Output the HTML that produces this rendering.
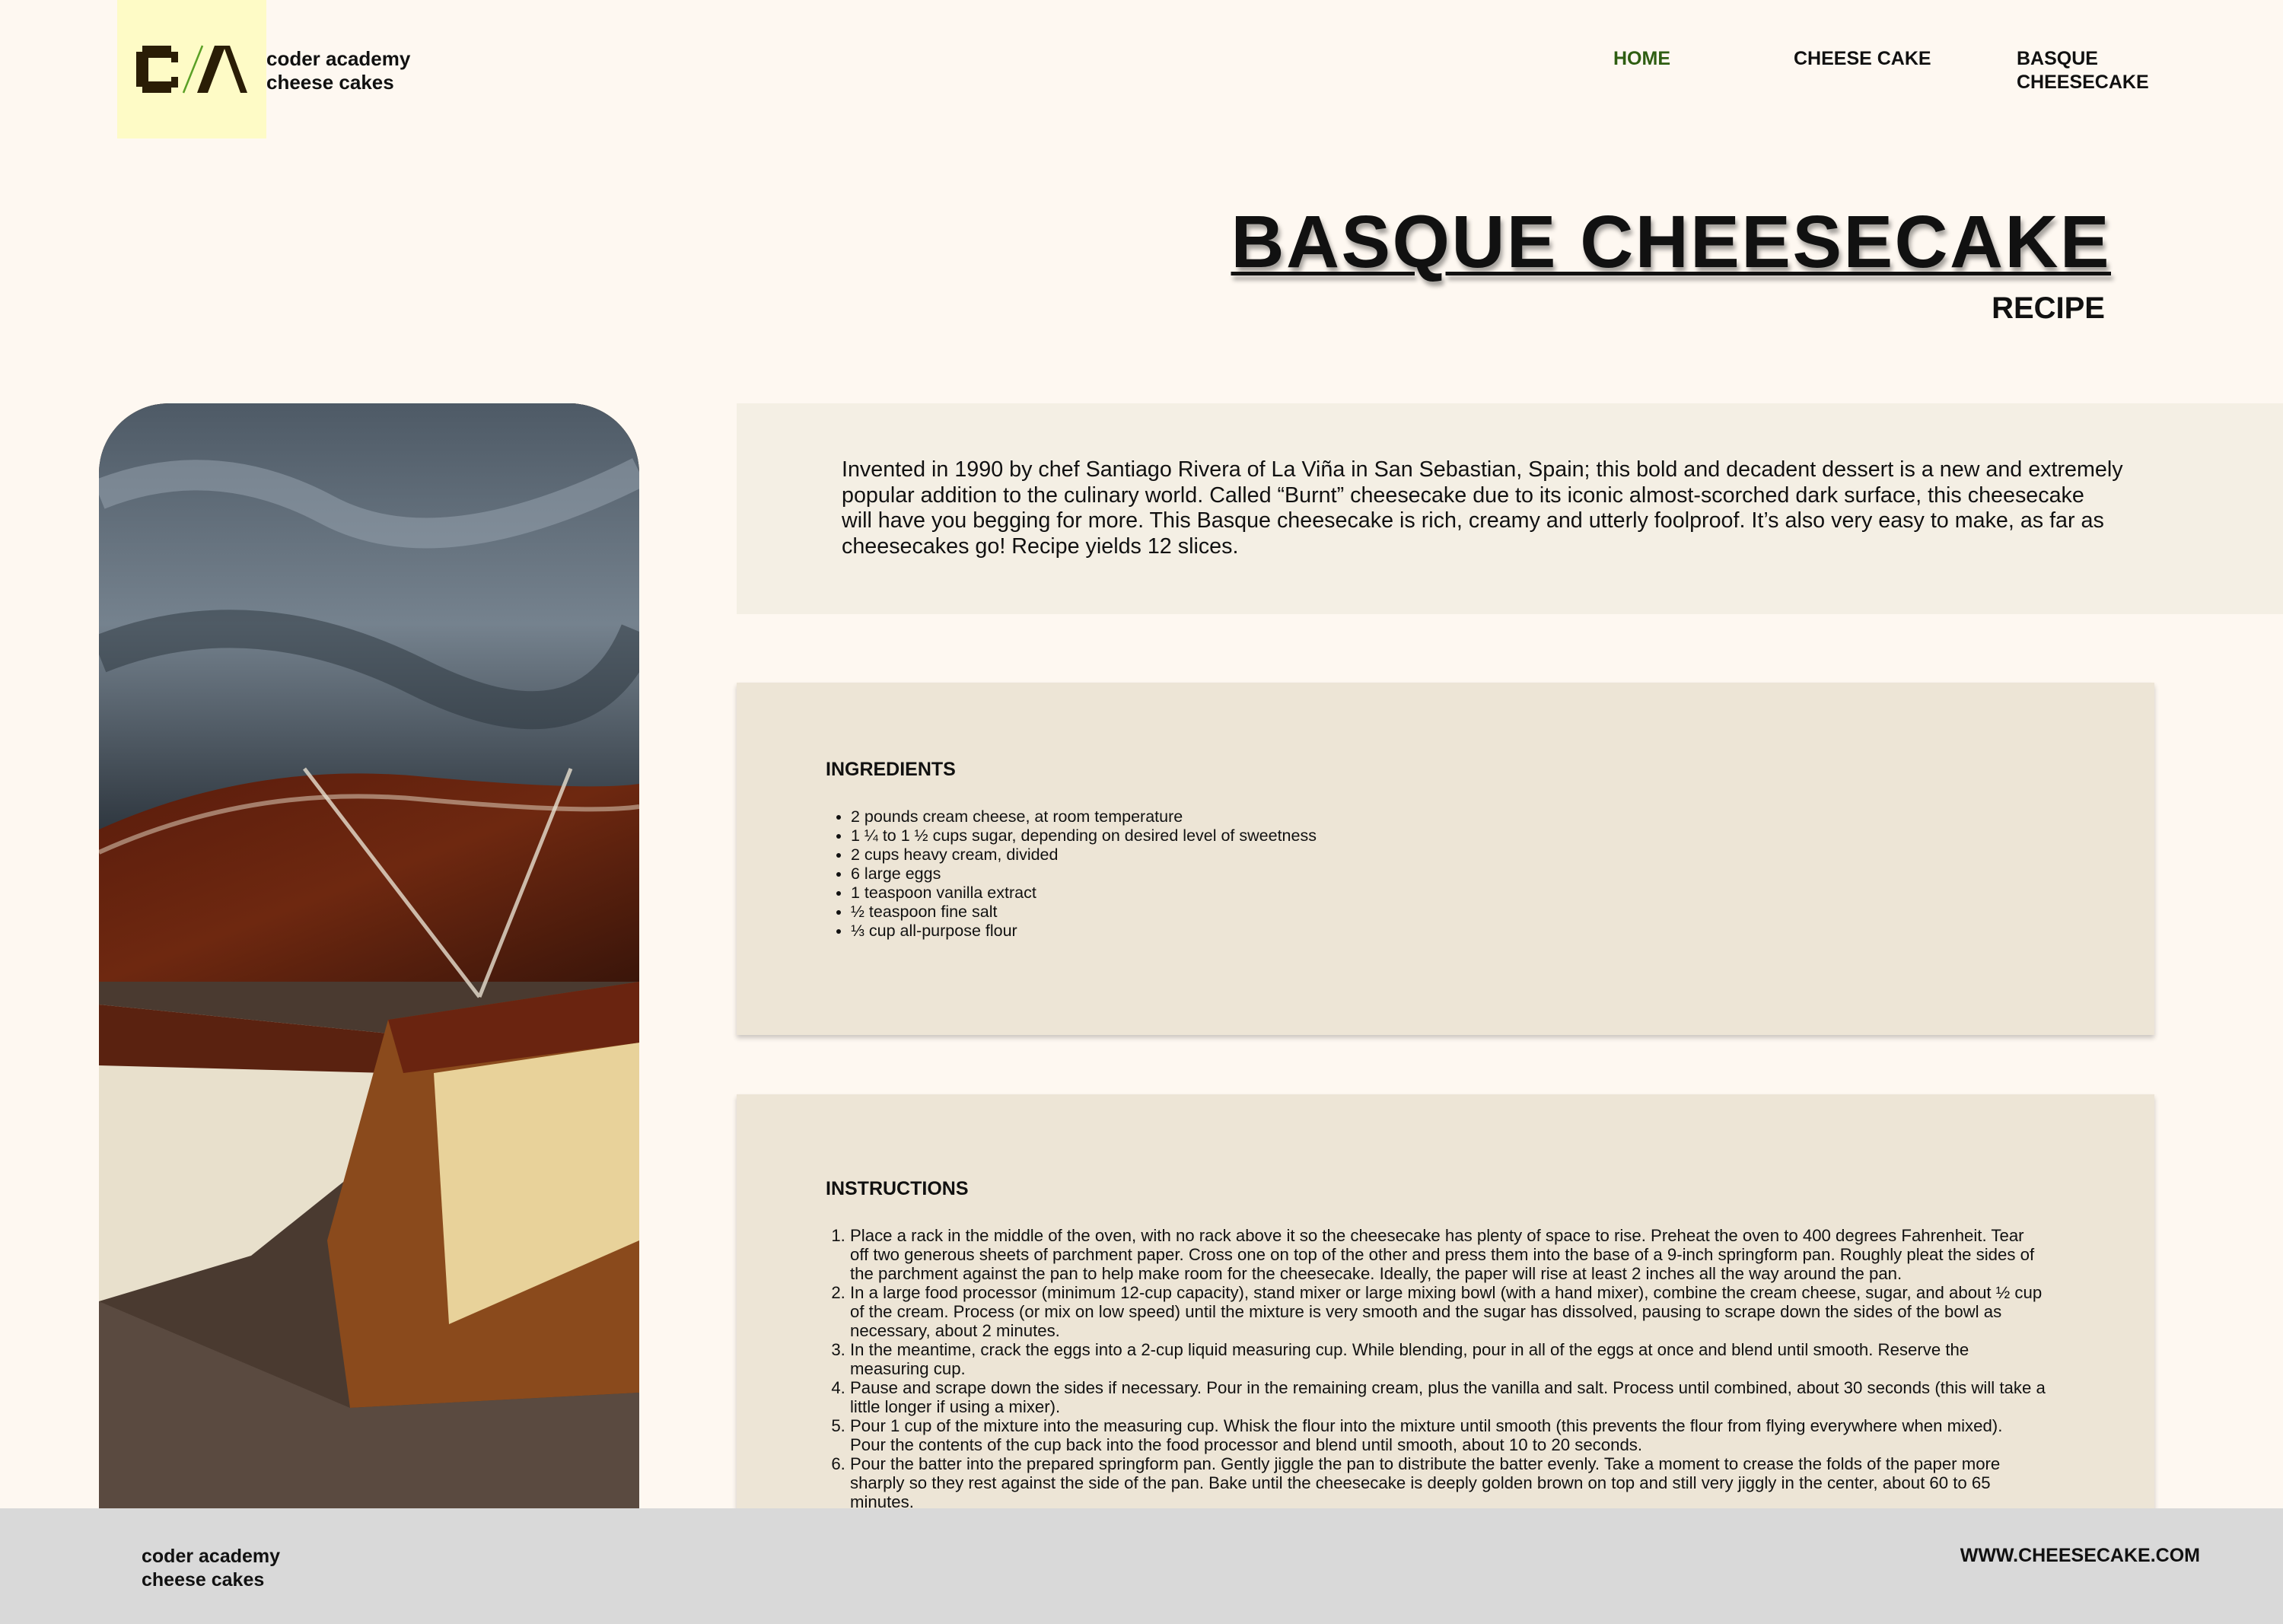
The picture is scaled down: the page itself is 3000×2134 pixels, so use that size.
<!DOCTYPE html>
<html><head><meta charset="utf-8">
<style>
*{margin:0;padding:0;box-sizing:border-box}
html,body{width:3000px;height:2134px;overflow:hidden}
body{background:#fef8f1;font-family:"Liberation Sans",sans-serif;color:#111;position:relative}
.abs{position:absolute}
.logo{left:154px;top:0;width:196px;height:182px;background:#fefbc6}
.lt{left:350px;top:62px;font-size:26px;font-weight:bold;line-height:31px}
.nav{font-size:25px;font-weight:bold;line-height:31px;top:62px}
h1{position:absolute;right:226px;top:262px;font-size:97px;font-weight:bold;text-decoration:underline;text-decoration-thickness:5px;text-underline-offset:6px;text-shadow:3px 6px 6px rgba(0,0,0,.35);white-space:nowrap;letter-spacing:2.4px}
.recipe{right:234px;top:383px;font-size:40px;font-weight:bold}
.img{left:130px;top:530px;width:710px;height:1460px;border-radius:92px 92px 0 0;overflow:hidden;background:#3b2a22}
.intro{left:968px;top:530px;width:2032px;height:277px;background:#f4efe4}
.intro p{position:absolute;left:138px;top:71px;font-size:28.7px;line-height:33.5px;white-space:nowrap}
.box{left:968px;width:1863px;background:#ede5d6;box-shadow:0 4px 6px rgba(0,0,0,.2)}
.box h2{position:absolute;left:117px;font-size:25px;font-weight:bold}
.ing ul{position:absolute;left:150px;top:164px;font-size:21.5px;line-height:25px}
.ins ol{position:absolute;left:149px;top:173px;font-size:22.2px;line-height:25px;white-space:nowrap}
footer{position:absolute;left:0;top:1982px;width:3000px;height:152px;background:#d9d9d9}
</style></head><body>
<div class="abs logo">
<svg width="196" height="182" viewBox="154 0 196 182" style="position:absolute;left:0;top:0">
<path d="M187 60h38v8h9v14h-9v-6h-30v31h30v-6h9v14h-9v7h-38v-8h-8V68h8z" fill="#2a1d06"/>
<path d="M241 122L266 60" stroke="#5aa026" stroke-width="2.5"/>
<path d="M259 122L282 60h20l23 62h-9l-21-58-22 58z" fill="#2a1d06"/>
</svg>
</div>
<div class="abs lt">coder academy<br>cheese cakes</div>
<div class="abs nav" style="left:2120px;color:#2e5e12">HOME</div>
<div class="abs nav" style="left:2357px">CHEESE CAKE</div>
<div class="abs nav" style="left:2650px">BASQUE<br>CHEESECAKE</div>
<h1>BASQUE CHEESECAKE</h1>
<div class="abs recipe">RECIPE</div>

<div class="abs img">
<svg width="710" height="1460" viewBox="0 0 710 1460">
<defs>
<linearGradient id="cl" x1="0" y1="0" x2="0" y2="1"><stop offset="0" stop-color="#4e5a66"/><stop offset=".5" stop-color="#75828e"/><stop offset="1" stop-color="#2a323a"/></linearGradient>
<linearGradient id="tp" x1="0" y1="0" x2="1" y2="1"><stop offset="0" stop-color="#5a1c0c"/><stop offset=".5" stop-color="#6e2810"/><stop offset="1" stop-color="#3a150a"/></linearGradient>
</defs>
<rect width="710" height="1460" fill="#4a3a30"/>
<rect width="710" height="580" fill="url(#cl)"/>
<path d="M0 120Q150 60 300 140T710 90" stroke="#9aa6b2" stroke-width="40" fill="none" opacity=".5"/>
<path d="M0 330Q200 250 420 360T710 300" stroke="#2a333c" stroke-width="50" fill="none" opacity=".5"/>
<path d="M0 560Q200 470 420 490T710 500V760H0z" fill="url(#tp)"/>
<path d="M0 590Q200 500 420 520T710 530" stroke="#e8dcc8" stroke-width="6" fill="none" opacity=".5"/>
<path d="M0 790L400 830V960L200 1120 0 1180z" fill="#e8e0cc"/>
<path d="M0 790L400 830 380 880 0 870z" fill="#5a2210"/>
<path d="M380 810L710 760V1300L330 1320 300 1100z" fill="#8a4a1c"/>
<path d="M440 880L710 840V1100L460 1210z" fill="#e8d29a"/>
<path d="M380 810L710 760 710 840 400 880z" fill="#6a2410"/>
<path d="M0 1180L330 1320 710 1300V1460H0z" fill="#5a4a40"/>
<path d="M270 480L500 780M620 480L500 780" stroke="#e8e0d0" stroke-width="5" opacity=".8"/>
</svg>
</div>

<div class="abs intro"><p>Invented in 1990 by chef Santiago Rivera of La Viña in San Sebastian, Spain; this bold and decadent dessert is a new and extremely<br>popular addition to the culinary world. Called “Burnt” cheesecake due to its iconic almost-scorched dark surface, this cheesecake<br>will have you begging for more. This Basque cheesecake is rich, creamy and utterly foolproof. It’s also very easy to make, as far as<br>cheesecakes go! Recipe yields 12 slices.</p></div>

<div class="abs box ing" style="top:897px;height:463px">
<h2 style="top:100px">INGREDIENTS</h2>
<ul>
<li>2 pounds cream cheese, at room temperature</li>
<li>1 ¼ to 1 ½ cups sugar, depending on desired level of sweetness</li>
<li>2 cups heavy cream, divided</li>
<li>6 large eggs</li>
<li>1 teaspoon vanilla extract</li>
<li>½ teaspoon fine salt</li>
<li>⅓ cup all-purpose flour</li>
</ul></div>

<div class="abs box ins" style="top:1438px;height:600px">
<h2 style="top:110px">INSTRUCTIONS</h2>
<ol>
<li>Place a rack in the middle of the oven, with no rack above it so the cheesecake has plenty of space to rise. Preheat the oven to 400 degrees Fahrenheit. Tear<br>off two generous sheets of parchment paper. Cross one on top of the other and press them into the base of a 9-inch springform pan. Roughly pleat the sides of<br>the parchment against the pan to help make room for the cheesecake. Ideally, the paper will rise at least 2 inches all the way around the pan.</li>
<li>In a large food processor (minimum 12-cup capacity), stand mixer or large mixing bowl (with a hand mixer), combine the cream cheese, sugar, and about ½ cup<br>of the cream. Process (or mix on low speed) until the mixture is very smooth and the sugar has dissolved, pausing to scrape down the sides of the bowl as<br>necessary, about 2 minutes.</li>
<li>In the meantime, crack the eggs into a 2-cup liquid measuring cup. While blending, pour in all of the eggs at once and blend until smooth. Reserve the<br>measuring cup.</li>
<li>Pause and scrape down the sides if necessary. Pour in the remaining cream, plus the vanilla and salt. Process until combined, about 30 seconds (this will take a<br>little longer if using a mixer).</li>
<li>Pour 1 cup of the mixture into the measuring cup. Whisk the flour into the mixture until smooth (this prevents the flour from flying everywhere when mixed).<br>Pour the contents of the cup back into the food processor and blend until smooth, about 10 to 20 seconds.</li>
<li>Pour the batter into the prepared springform pan. Gently jiggle the pan to distribute the batter evenly. Take a moment to crease the folds of the paper more<br>sharply so they rest against the side of the pan. Bake until the cheesecake is deeply golden brown on top and still very jiggly in the center, about 60 to 65<br>minutes.</li>
</ol></div>

<footer>
<div class="abs" style="left:186px;top:48px;font-size:25px;font-weight:bold;line-height:31px">coder academy<br>cheese cakes</div>
<div class="abs" style="right:109px;top:48px;font-size:25px;font-weight:bold">WWW.CHEESECAKE.COM</div>
</footer>
</body></html>
